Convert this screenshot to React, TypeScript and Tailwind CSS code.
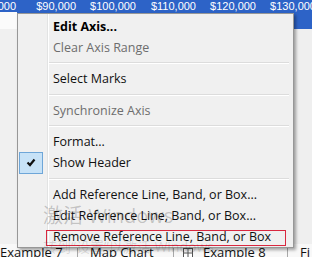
import React from "react";

const font = { fontFamily: '"Open Sans", "Noto Sans", "Noto Sans CJK SC", sans-serif' };

function Item({ label, bold, disabled, checked, boxed }: { label: string; bold?: boolean; disabled?: boolean; checked?: boolean; boxed?: boolean }) {
  return (
    <div className="relative flex h-[21px] items-center">
      <div className="flex h-full w-[30px] shrink-0 items-center pl-[1px]">
        {checked && (
          <div className="flex h-[22px] w-[24px] items-center justify-center border border-[#6ea6d8] bg-[#c7e2f7]">
            <svg width="10" height="9" viewBox="0 0 10 9">
              <polyline points="1.5,4.5 4,7 8.5,1.5" fill="none" stroke="#111" strokeWidth="2.2" />
            </svg>
          </div>
        )}
      </div>
      <span
        className={`pl-[5px] text-[12.5px] leading-[21px] whitespace-nowrap ${bold ? "font-bold text-black" : disabled ? "text-[#6d6d6d]" : "text-[#111]"}`}
      >
        {label}
      </span>
      {boxed && <div className="absolute left-[28px] top-[4px] h-[16px] w-[240px] border border-[#d8283f]" />}
    </div>
  );
}

function Sep({ h }: { h: string }) {
  return (
    <div className={`flex ${h} items-center pl-[31px] pr-[4px]`}>
      <div className="h-[2px] w-full border-t border-b border-t-[#dcdcdc] border-b-white" />
    </div>
  );
}

export default function App() {
  const labels = ["$80,000", "$90,000", "$100,000", "$110,000", "$120,000", "$130,000"];
  return (
    <div className="relative flex h-[257px] w-[312px] flex-col overflow-hidden bg-[#efefef]" style={font}>
      {/* header */}
      <div className="h-[29px] shrink-0 bg-[#2d63c7]">
        <div className="ml-[-44px] flex h-[12px] items-center" style={{ fontFamily: '"Liberation Sans", Arial, sans-serif' }}>
          {labels.map((l) => (
            <div key={l} className="w-[60px] shrink-0 text-right text-[11px] leading-[12px] text-white">
              {l}
            </div>
          ))}
        </div>
        <div className="flex h-[17px]">
          <div className="w-[17px] bg-[#fbfbfb]" />
        </div>
      </div>

      <div className="flex-1 bg-[#efefef]">
        <div className="h-full w-[17px] bg-[#f0f0f0]" />
      </div>

      {/* tab row */}
      <div className="flex h-[13px] shrink-0 items-start bg-[#f8f8f8] text-[13px] leading-[16px] text-[#111]">
        <div className="flex h-full w-[78px] shrink-0 border-r border-[#a8a8a8]">
          <span className="whitespace-nowrap">Example 7</span>
        </div>
        <div className="flex h-full w-[96px] shrink-0 border-r border-[#a8a8a8] pl-[12px]">
          <span className="whitespace-nowrap">Map Chart</span>
        </div>
        <div className="flex h-full w-[114px] shrink-0 items-start border-r border-[#a8a8a8] pl-[9px]">
          <svg width="10" height="10" viewBox="0 0 10 10" className="mt-[4px] shrink-0">
            <rect x="0.5" y="0.5" width="9" height="9" fill="#fff" stroke="#555" />
            <line x1="5" y1="0.5" x2="5" y2="9.5" stroke="#555" />
            <line x1="0.5" y1="5" x2="9.5" y2="5" stroke="#555" />
          </svg>
          <span className="ml-[10px] whitespace-nowrap">Example 8</span>
        </div>
        <div className="pl-[12px] whitespace-nowrap">Fi</div>
      </div>

      {/* context menu */}
      <div
        className="absolute left-[17px] top-[13px] z-10 flex w-[277px] flex-col border border-[#979797] pt-[2px] shadow-[2px_2px_3px_rgba(0,0,0,0.35)]"
        style={{
          background:
            "linear-gradient(to right, #f0f0f0 0px, #f0f0f0 29px, #e2e3e3 29px, #e2e3e3 30px, #ffffff 30px, #ffffff 31px, #f0f0f0 31px)",
        }}
      >
        <Item label="Edit Axis..." bold />
        <Item label="Clear Axis Range" disabled />
        <Sep h="h-[10px]" />
        <Item label="Select Marks" />
        <Sep h="h-[11px]" />
        <Item label="Synchronize Axis" disabled />
        <Sep h="h-[10px]" />
        <Item label="Format..." />
        <Item label="Show Header" checked />
        <Sep h="h-[11px]" />
        <Item label="Add Reference Line, Band, or Box..." />
        <Item label="Edit Reference Line, Band, or Box..." />
        <Item label="Remove Reference Line, Band, or Box" boxed />
      </div>

      {/* activation watermark */}
      <div className="pointer-events-none absolute left-[43px] top-[203px] z-20 text-[20px] leading-[26px] whitespace-nowrap text-[rgba(0,0,0,0.2)]">
        激活 Windows
      </div>
      <div className="pointer-events-none absolute left-[43px] top-[238px] z-20 text-[14px] leading-[18px] whitespace-nowrap text-[rgba(0,0,0,0.12)]">
        转到“设置”以激活 Windows。
      </div>
    </div>
  );
}
